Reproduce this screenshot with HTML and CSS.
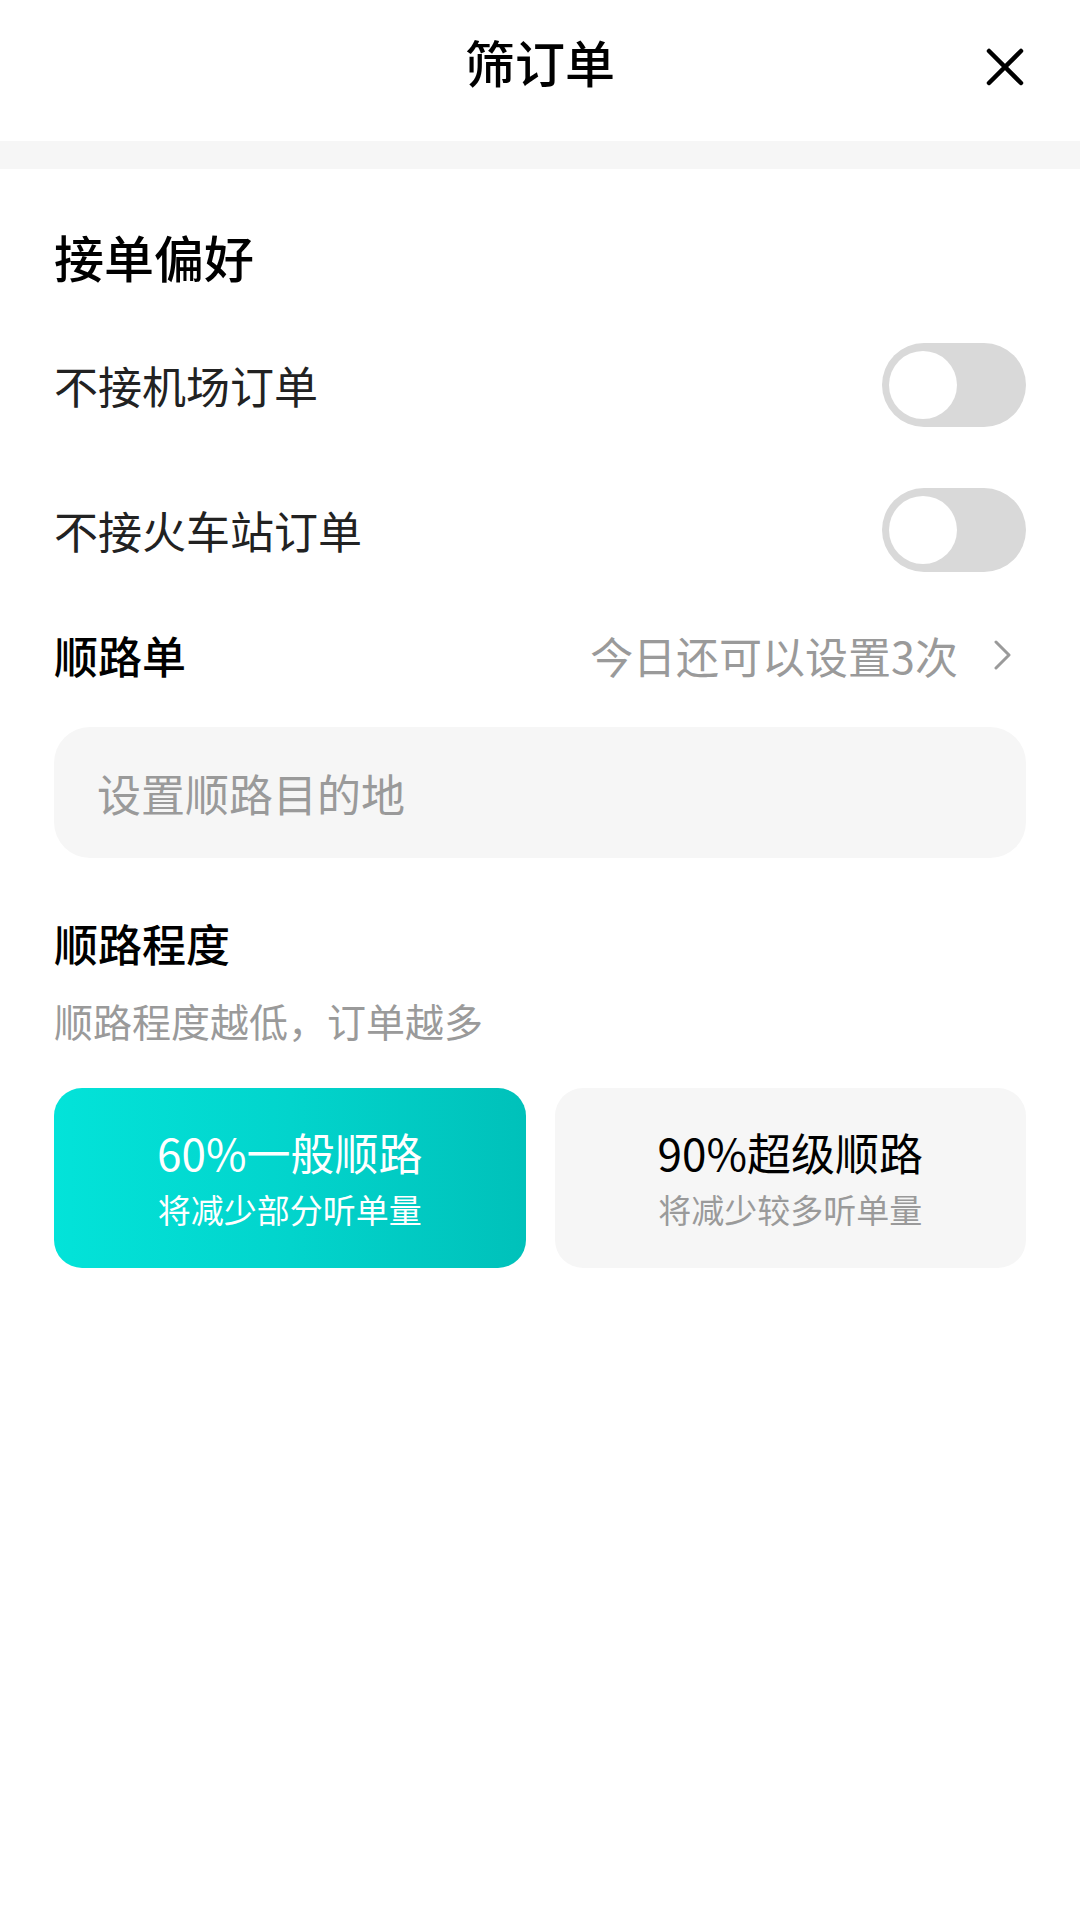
FILE: index.html
```html
<!DOCTYPE html>
<html lang="zh-CN">
<head>
<meta charset="utf-8">
<title>筛订单</title>
<link rel="stylesheet" href="styles.css">
</head>
<body>
<div class="page">
  <header class="header">
    <div class="header-side"></div>
    <h1 class="header-title">筛订单</h1>
    <div class="header-side header-side-right">
      <svg class="close-icon" width="40" height="40" viewBox="0 0 40 40">
        <path d="M4 4 L36 36 M36 4 L4 36" stroke="#000" stroke-width="4.5" stroke-linecap="round" fill="none"/>
      </svg>
    </div>
  </header>
  <div class="band"></div>

  <main class="content">
    <h2 class="section-title">接单偏好</h2>

    <div class="toggle-row">
      <span class="row-label">不接机场订单</span>
      <div class="toggle"><div class="knob"></div></div>
    </div>
    <div class="toggle-row toggle-row-2">
      <span class="row-label">不接火车站订单</span>
      <div class="toggle"><div class="knob"></div></div>
    </div>

    <div class="route-row">
      <span class="route-title">顺路单</span>
      <span class="route-meta">
        <span class="route-meta-text">今日还可以设置3次</span>
        <svg class="chevron" width="18" height="30" viewBox="0 0 18 30">
          <path d="M2 2 L15 15 L2 28" stroke="#9a9a9a" stroke-width="3" stroke-linecap="round" stroke-linejoin="round" fill="none"/>
        </svg>
      </span>
    </div>

    <div class="dest-input">设置顺路目的地</div>

    <h3 class="degree-title">顺路程度</h3>
    <p class="degree-sub">顺路程度越低，订单越多</p>

    <div class="cards">
      <div class="card card-active">
        <div class="card-title">60%一般顺路</div>
        <div class="card-sub">将减少部分听单量</div>
      </div>
      <div class="card">
        <div class="card-title">90%超级顺路</div>
        <div class="card-sub">将减少较多听单量</div>
      </div>
    </div>
  </main>
</div>
</body>
</html>
```

FILE: styles.css
```css
* {
  box-sizing: border-box;
}

html, body {
  margin: 0;
  padding: 0;
  background: #ffffff;
}

body {
  font-family: "Noto Sans CJK SC", "Noto Sans", sans-serif;
  color: #111;
  width: 1080px;
  min-height: 1920px;
}

.page {
  width: 1080px;
}

.header {
  height: 141px;
  display: grid;
  grid-template-columns: 1fr auto 1fr;
  align-items: center;
  padding: 0 55px 20px 55px;
}

.header-title {
  margin: 0;
  font-size: 50px;
  font-weight: 500;
  line-height: 60px;
  color: #000;
}

.header-side-right {
  display: flex;
  justify-content: flex-end;
  padding-top: 12px;
}

.close-icon {
  display: block;
}

.band {
  height: 28px;
  background: #f6f6f6;
}

.content {
  padding: 0 54px;
}

.section-title {
  margin: 52px 0 0 0;
  font-size: 50px;
  font-weight: 500;
  line-height: 70px;
  color: #000;
}

.toggle-row {
  margin-top: 52px;
  height: 84px;
  display: flex;
  align-items: center;
  justify-content: space-between;
}

.toggle-row-2 {
  margin-top: 61px;
}

.row-label {
  font-size: 44px;
  line-height: 60px;
  color: #222;
}

.toggle {
  width: 144px;
  height: 84px;
  border-radius: 42px;
  background: #d9d9d9;
  display: flex;
  align-items: center;
  padding-left: 7px;
}

.knob {
  width: 68px;
  height: 68px;
  border-radius: 50%;
  background: #ffffff;
}

.route-row {
  margin-top: 53px;
  height: 60px;
  display: flex;
  align-items: center;
  justify-content: space-between;
}

.route-title {
  font-size: 44px;
  font-weight: 500;
  line-height: 60px;
  color: #000;
}

.route-meta {
  display: flex;
  align-items: center;
  gap: 36px;
  padding-right: 14px;
}

.route-meta-text {
  font-size: 43px;
  line-height: 60px;
  color: #9a9a9a;
}

.chevron {
  display: block;
}

.dest-input {
  margin-top: 42px;
  height: 131px;
  border-radius: 36px;
  background: #f6f6f6;
  display: flex;
  align-items: center;
  padding-left: 43px;
  font-size: 44px;
  color: #9a9a9a;
}

.degree-title {
  margin: 55px 0 0 0;
  font-size: 44px;
  font-weight: 500;
  line-height: 60px;
  color: #000;
}

.degree-sub {
  margin: 22px 0 0 0;
  font-size: 39px;
  line-height: 50px;
  color: #9a9a9a;
}

.cards {
  margin-top: 43px;
  display: grid;
  grid-template-columns: 1fr 1fr;
  gap: 29px;
}

.card {
  height: 180px;
  border-radius: 28px;
  background: #f6f6f6;
  display: flex;
  flex-direction: column;
  align-items: center;
  padding-top: 36px;
}

.card-active {
  background: linear-gradient(90deg, #03e3d9 0%, #02d4cc 50%, #00c1ba 100%);
}

.card-title {
  font-size: 44px;
  line-height: 56px;
  color: #000;
}

.card-sub {
  margin-top: 6px;
  font-size: 33px;
  line-height: 46px;
  color: #9a9a9a;
}

.card-active .card-title,
.card-active .card-sub {
  color: #ffffff;
}
```
